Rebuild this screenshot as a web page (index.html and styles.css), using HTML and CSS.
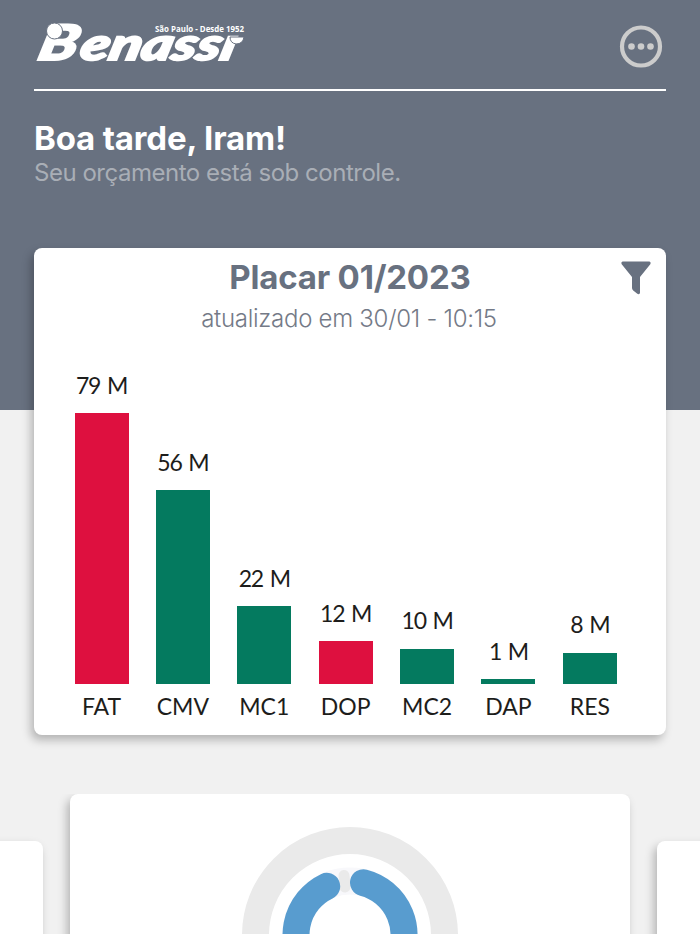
FILE: index.html
```html
<!DOCTYPE html>
<html lang="pt-BR">
<head>
    <meta charset="UTF-8">
    <meta name="viewport" content="width=device-width, initial-scale=1.0">
    <title>Benassi</title>
    <link rel="stylesheet" href="styles.css">
</head>
<body>

<header class="header">
    <div class="top-bar">
        <svg class="logo" width="212" height="42" viewBox="0 0 212 42" role="img" aria-label="Benassi">
            <g transform="translate(0 37.500) skewX(-14)">
                <text class="logo-name" x="1" y="0" font-size="49" textLength="39" lengthAdjust="spacingAndGlyphs">B</text>
                <text class="logo-name" x="43" y="0" font-size="45" textLength="155" lengthAdjust="spacingAndGlyphs">enassı</text>
            </g>
            <circle class="logo-dot" cx="19.500" cy="9" r="8"/>
            <path class="logo-dot" d="M195 15H209Q208 22 201 22Q195 21 195 15Z"/>
            <text class="logo-tag" x="120" y="10" textLength="89" lengthAdjust="spacingAndGlyphs">São Paulo - Desde 1952</text>
        </svg>
        <svg class="menu-icon" width="44" height="44" viewBox="0 0 44 44">
            <circle cx="22" cy="22.500" r="19" fill="none" stroke="#ccc" stroke-width="4.200"/>
            <circle cx="12.500" cy="22.500" r="3.300" fill="#ccc"/>
            <circle cx="22" cy="22.500" r="3.300" fill="#ccc"/>
            <circle cx="31.500" cy="22.500" r="3.300" fill="#ccc"/>
        </svg>
    </div>
    <h1>Boa tarde, Iram!</h1>
    <p class="status">Seu orçamento está sob controle.</p>
</header>

<main>
    <section class="card score">
        <svg class="filter-icon" width="30" height="34" viewBox="0 0 30 34">
            <path d="M1.700 0.500H28.300Q30.300 1.200 29.300 3.200L19 16V32Q18 34 16 32.600L12.200 29.500Q11 28.400 11 27V16L0.700 3.200Q-0.300 1.200 1.700 0.500Z" fill="#687180"/>
        </svg>
        <h2>Placar 01/2023</h2>
        <p class="updated">atualizado em 30/01 - 10:15</p>
        <div class="chart">
            <div class="col"><span class="value">79 M</span><div class="bar red" style="height: 270.5px"></div><span class="name">FAT</span></div>
            <div class="col"><span class="value">56 M</span><div class="bar" style="height: 193.5px"></div><span class="name">CMV</span></div>
            <div class="col"><span class="value">22 M</span><div class="bar" style="height: 77.5px"></div><span class="name">MC1</span></div>
            <div class="col"><span class="value">12 M</span><div class="bar red" style="height: 42.5px"></div><span class="name">DOP</span></div>
            <div class="col"><span class="value">10 M</span><div class="bar" style="height: 35px"></div><span class="name">MC2</span></div>
            <div class="col"><span class="value">1 M</span><div class="bar" style="height: 4.5px"></div><span class="name">DAP</span></div>
            <div class="col"><span class="value">8 M</span><div class="bar" style="height: 31px"></div><span class="name">RES</span></div>
        </div>
    </section>

    <section class="carousel">
        <div class="card side"></div>
        <div class="card center">
            <svg width="216" height="216" viewBox="-108 -108 216 216" fill="none" stroke-width="27">
                <circle r="94.500" stroke="#eaeaea"/>
                <circle r="54" stroke="#f8f8fb"/>
                <path d="M-6 -59.500L-5 -48" stroke="#eaeaea" stroke-width="11" stroke-linecap="round"/>
                <path d="M13.500 -52.300A54 54 0 1 1 -23.300 -48.700" stroke="#589ccf" stroke-linecap="round"/>
            </svg>
        </div>
        <div class="card side"></div>
    </section>
</main>

</body>
</html>
```

FILE: styles.css
```css
/* General styling */
* {
    box-sizing: border-box;
}

body {
    margin: 0;
    background: #f1f1f1;
    font-family: Inter, "Liberation Sans", sans-serif;
}

h1, h2, p {
    margin: 0;
    white-space: nowrap;
}

/* Header styling */
.header {
    height: 410px;
    padding: 0 34px;
    background: #687180;
}

.top-bar {
    display: flex;
    justify-content: space-between;
    height: 90.5px;
    padding: 22px 3px 0 1px;
    border-bottom: 2px solid #fff;
}

.menu-icon {
    margin-top: 2px;
}

.logo {
    overflow: visible;
}

.logo-name {
    font-family: Lato, sans-serif;
    font-weight: 900;
    font-style: italic;
    fill: #fff;
    stroke: #fff;
    stroke-width: 2;
}

.logo-dot {
    fill: #fff;
    stroke: #687180;
    stroke-width: 1;
}

.logo-tag {
    font-family: "Open Sans", sans-serif;
    font-size: 9.5px;
    font-weight: 700;
    fill: #fff;
}

h1 {
    margin-top: 26px;
    color: #fff;
    font-size: 33px;
    line-height: 42px;
    letter-spacing: -0.15px;
}

.status {
    margin-top: 1px;
    color: #a9aeb6;
    font-size: 24px;
    line-height: 26px;
    letter-spacing: -0.48px;
}

/* Card styling */
.card {
    background: #fff;
    border-radius: 8px;
    box-shadow: -3px 5px 10px rgba(0, 0, 0, 0.26);
}

.score {
    position: relative;
    height: 487px;
    margin: -162px 34px 0;
    padding-top: 8px;
    text-align: center;
}

.filter-icon {
    position: absolute;
    top: 13px;
    right: 15px;
}

h2 {
    color: #687180;
    font-size: 33px;
    line-height: 42px;
    letter-spacing: -0.2px;
}

.updated {
    margin-top: 6px;
    margin-right: 2px;
    color: #747a87;
    font-size: 24px;
    font-weight: 300;
    line-height: 30px;
    letter-spacing: -0.28px;
}

/* Bar chart */
.chart {
    display: flex;
    gap: 27.4px;
    height: 387px;
    padding-left: 40.5px;
    font-family: Lato, "Liberation Sans", sans-serif;
    font-size: 23px;
    color: #1d1d1b;
}

.col {
    display: flex;
    flex-direction: column;
    justify-content: flex-end;
    align-items: center;
    width: 54px;
    white-space: nowrap;
}

.value {
    line-height: 30px;
    margin-bottom: 13.5px;
    letter-spacing: -1.2px;
    word-spacing: 2px;
}

.bar {
    flex: none;
    width: 54px;
    background: #047a5f;
}

.red {
    background: #de103f;
}

.name {
    margin-top: 7.5px;
    line-height: 30px;
}

/* Bottom carousel */
.carousel {
    display: flex;
    justify-content: center;
    align-items: flex-start;
    gap: 27px;
    height: 140px;
    margin-top: 59px;
    overflow: hidden;
    overflow: clip;
}

.side {
    flex: none;
    width: 560px;
    height: 400px;
    margin-top: 47px;
}

.center {
    flex: none;
    width: 560px;
    height: 500px;
    padding-top: 33px;
    text-align: center;
}
```
